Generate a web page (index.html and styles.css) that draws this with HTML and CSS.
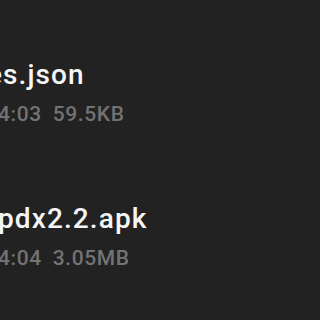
FILE: index.html
```html
<!DOCTYPE html>
<html>
<head>
<meta charset="utf-8">
<link rel="stylesheet" href="styles.css">
</head>
<body>
<ul class="list">
  <li class="row">
    <div class="name name-a">es.json</div>
    <div class="meta"><span class="time">4:03</span><span class="size">59.5KB</span></div>
  </li>
  <li class="row">
    <div class="name name-b">pdx2.2.apk</div>
    <div class="meta"><span class="time">4:04</span><span class="size">3.05MB</span></div>
  </li>
</ul>
</body>
</html>
```
FILE: styles.css
```css
html, body {
  margin: 0;
  padding: 0;
  background: #222222;
  width: 320px;
  height: 320px;
  overflow: hidden;
}
.list {
  list-style: none;
  margin: 0;
  padding: 0;
  font-family: Roboto, "Noto Sans", sans-serif;
}
.row {
  height: 144px;
  box-sizing: border-box;
  padding-top: 59px;
  display: flex;
  flex-direction: column;
  gap: 10px;
}
.name {
  font-size: 28px;
  line-height: 32px;
  font-weight: 500;
  letter-spacing: 1.1px;
  color: #f5f5f5;
  white-space: nowrap;
}
.name-a { margin-left: -13px; }
.name-b { margin-left: -2px; }
.meta {
  margin-left: -2px;
  font-size: 21px;
  line-height: 26px;
  font-weight: 500;
  letter-spacing: 0.6px;
  color: #737373;
  display: flex;
  gap: 11px;
  white-space: nowrap;
}
```
